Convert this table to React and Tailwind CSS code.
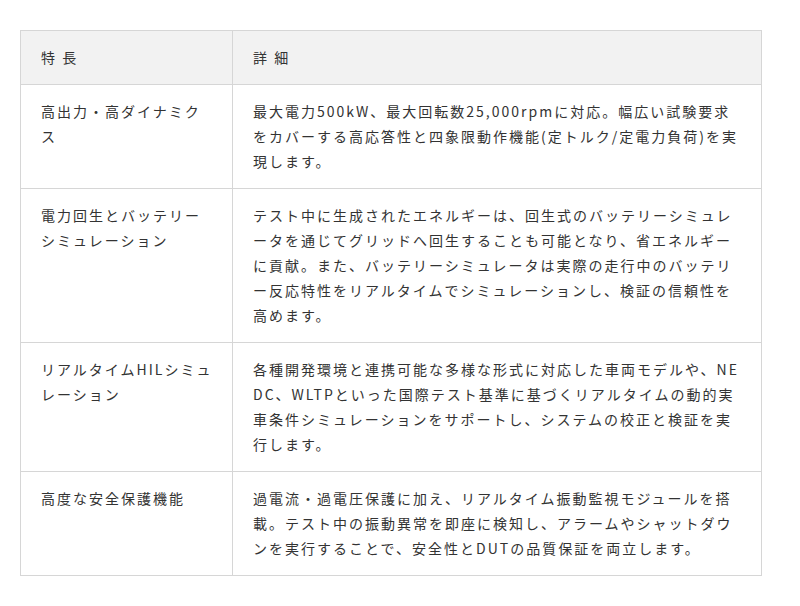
const rows = [
  {
    feature: "高出力・高ダイナミクス",
    detail:
      "最大電力500kW、最大回転数25,000rpmに対応。幅広い試験要求をカバーする高応答性と四象限動作機能(定トルク/定電力負荷)を実現します。",
  },
  {
    feature: "電力回生とバッテリーシミュレーション",
    detail:
      "テスト中に生成されたエネルギーは、回生式のバッテリーシミュレータを通じてグリッドへ回生することも可能となり、省エネルギーに貢献。また、バッテリーシミュレータは実際の走行中のバッテリー反応特性をリアルタイムでシミュレーションし、検証の信頼性を高めます。",
  },
  {
    feature: "リアルタイムHILシミュレーション",
    detail:
      "各種開発環境と連携可能な多様な形式に対応した車両モデルや、NEDC、WLTPといった国際テスト基準に基づくリアルタイムの動的実車条件シミュレーションをサポートし、システムの校正と検証を実行します。",
  },
  {
    feature: "高度な安全保護機能",
    detail:
      "過電流・過電圧保護に加え、リアルタイム振動監視モジュールを搭載。テスト中の振動異常を即座に検知し、アラームやシャットダウンを実行することで、安全性とDUTの品質保証を両立します。",
  },
];

function Cell({ children, head, first }) {
  return (
    <div
      className={
        "border-r border-b border-[#d6d6d6] pl-[20px] py-[14px] break-all" +
        (first ? " pr-[16px]" : " pr-[20px]") +
        (head ? " bg-[#f2f2f2]" : "")
      }
    >
      {children}
    </div>
  );
}

export default function App() {
  return (
    <div
      className="w-[800px] h-[606px] bg-white pt-[30px] pl-[20px] text-[14px] leading-[25px] tracking-[2px] text-[#333]"
      style={{ fontFamily: '"Noto Sans CJK JP", sans-serif' }}
    >
      <div className="grid grid-cols-[212px_529px] w-[742px] border-l border-t border-[#d6d6d6]">
        <Cell head first>特 長</Cell>
        <Cell head>詳 細</Cell>
        {rows.map((r, i) => (
          <div key={i} className="contents">
            <Cell first>{r.feature}</Cell>
            <Cell>{r.detail}</Cell>
          </div>
        ))}
      </div>
    </div>
  );
}
